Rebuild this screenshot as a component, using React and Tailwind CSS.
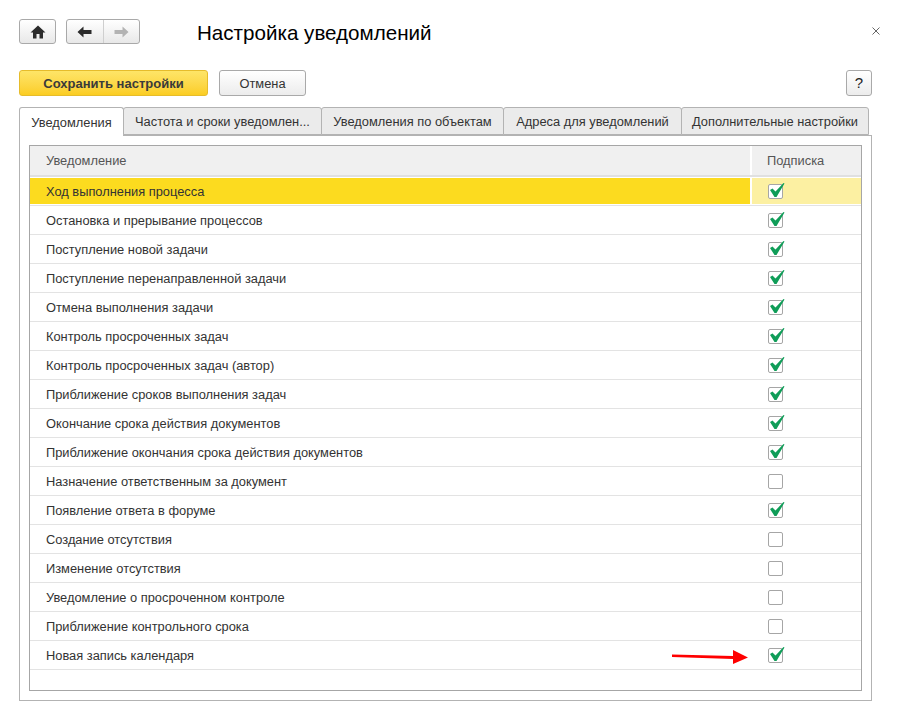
import React from "react";

const ROWS = [
  { label: "Ход выполнения процесса", on: true },
  { label: "Остановка и прерывание процессов", on: true },
  { label: "Поступление новой задачи", on: true },
  { label: "Поступление перенаправленной задачи", on: true },
  { label: "Отмена выполнения задачи", on: true },
  { label: "Контроль просроченных задач", on: true },
  { label: "Контроль просроченных задач (автор)", on: true },
  { label: "Приближение сроков выполнения задач", on: true },
  { label: "Окончание срока действия документов", on: true },
  { label: "Приближение окончания срока действия документов", on: true },
  { label: "Назначение ответственным за документ", on: false },
  { label: "Появление ответа в форуме", on: true },
  { label: "Создание отсутствия", on: false },
  { label: "Изменение отсутствия", on: false },
  { label: "Уведомление о просроченном контроле", on: false },
  { label: "Приближение контрольного срока", on: false },
  { label: "Новая запись календаря", on: true },
];

const TABS = [
  { label: "Частота и сроки уведомлен...", width: "w-[199px]" },
  { label: "Уведомления по объектам", width: "w-[183px]" },
  { label: "Адреса для уведомлений", width: "w-[179px]" },
  { label: "Дополнительные настройки", width: "w-[188px]" },
];

function Checkbox({ on }) {
  return (
    <div className="relative w-[15px] h-[15px] rounded-[2px] border border-[#a6a6a6] bg-white">
      {on && (
        <svg className="absolute left-0 top-[-5px]" width="17" height="19" viewBox="0 0 17 19">
          <path d="M1 10 L3.5 8.5 L6.5 11.5 L14.5 3 L15.5 3.5 L7.5 17 L5.5 17 Z" fill="#0f9d58" />
        </svg>
      )}
    </div>
  );
}

function Row({ label, on, active, last }) {
  return (
    <div className={`relative flex h-[29px] border-b border-[#e3e3e3] ${active ? "py-px" : ""}`}>
      <div className={`w-[722px] pl-4 pt-px flex items-center ${active ? "bg-[#fcdb1f] border-r-2 border-white" : ""}`}>
        {label}
      </div>
      <div className={`flex-1 pl-4 flex items-center ${active ? "bg-[#fcf0a2]" : ""}`}>
        <Checkbox on={on} />
      </div>
      {last && (
        <svg className="absolute left-[642px] top-[5px]" width="77" height="20" viewBox="0 0 77 20">
          <path d="M0 8.5 L61 10 L61 4 L76 11.5 L61 18 L61 13 L0 11 Z" fill="#ff0000" />
        </svg>
      )}
    </div>
  );
}

export default function App() {
  return (
    <div className="w-[898px] h-[716px] bg-white text-[12.85px] text-[#333] overflow-hidden" style={{ fontFamily: "'Liberation Sans', Arial, sans-serif" }}>
      {/* Header */}
      <div className="relative flex items-center h-[25px] mt-[19px] ml-[19px]">
        <button className="w-[37px] h-[25px] flex items-center justify-center rounded-[3px] border border-[#a9a9a9] bg-gradient-to-b from-white to-[#e8e8e8]">
          <svg width="16" height="14" viewBox="0 0 16 14">
            <path d="M8 0.5 L15.5 7.5 L13 7.5 L13 13.5 L9.5 13.5 L9.5 9 L6.5 9 L6.5 13.5 L3 13.5 L3 7.5 L0.5 7.5 Z" fill="#2b2b2b" />
          </svg>
        </button>
        <div className="ml-[10px] w-[74px] h-[25px] flex rounded-[3px] border border-[#a9a9a9] bg-gradient-to-b from-white to-[#e8e8e8]">
          <div className="flex-1 flex items-center justify-center border-r border-[#cfcfcf]">
            <svg width="15" height="12" viewBox="0 0 15 12">
              <path d="M0.5 6 L6.5 0.5 L6.5 4 L14.5 4 L14.5 8 L6.5 8 L6.5 11.5 Z" fill="#2b2b2b" />
            </svg>
          </div>
          <div className="flex-1 flex items-center justify-center">
            <svg width="15" height="12" viewBox="0 0 15 12">
              <path d="M14.5 6 L8.5 0.5 L8.5 4 L0.5 4 L0.5 8 L8.5 8 L8.5 11.5 Z" fill="#b3b3b3" />
            </svg>
          </div>
        </div>
        <div className="ml-[57px] pt-1 text-[20.6px] text-black">Настройка уведомлений</div>
        <div className="absolute left-[852px] top-[7px]">
          <svg width="10" height="10" viewBox="0 0 10 10">
            <path d="M1.5 1.5 L8.5 8.5 M8.5 1.5 L1.5 8.5" stroke="#666" strokeWidth="1" />
          </svg>
        </div>
      </div>

      {/* Command bar */}
      <div className="flex items-center h-[26px] mt-[26px] mx-[19px] w-[853px]">
        <button className="w-[189px] h-[26px] pt-px rounded-[3px] border border-[#e6bc2b] bg-gradient-to-b from-[#fee567] to-[#fbcd20] font-bold text-[#3a3a3a] text-[13px]">
          Сохранить настройки
        </button>
        <button className="ml-[11px] w-[87px] h-[26px] pt-px rounded-[3px] border border-[#a9a9a9] bg-gradient-to-b from-white to-[#ececec]">
          Отмена
        </button>
        <button className="ml-auto w-[26px] h-[26px] rounded-[3px] border border-[#a9a9a9] bg-gradient-to-b from-white to-[#ececec] text-[15px] text-[#222]">
          ?
        </button>
      </div>

      {/* Tabs */}
      <div className="flex mt-[11px] ml-[19px] h-[29px] relative z-10">
        <div className="w-[105px] h-[29px] pt-px flex items-center justify-center bg-white border border-b-0 border-[#b3b3b3] rounded-t-[3px]">
          Уведомления
        </div>
        {TABS.map((t) => (
          <div key={t.label} className={`${t.width} h-[28px] -ml-px pt-px flex items-center justify-center bg-[#ebebeb] border border-[#b3b3b3] rounded-t-[3px]`}>
            {t.label}
          </div>
        ))}
      </div>

      {/* Panel */}
      <div className="ml-[19px] -mt-px w-[853px] h-[566px] border border-[#b3b3b3] p-[9px]">
        <div className="w-[833px] h-[546px] border border-[#a6a6a6]">
          <div className="flex h-[31px] bg-[#f0f0f0] border-b-2 border-[#e0e0e0] text-[#555]">
            <div className="w-[722px] pl-4 flex items-center border-r-2 border-white">Уведомление</div>
            <div className="flex-1 pl-[15px] flex items-center">Подписка</div>
          </div>
          {ROWS.map((r, i) => (
            <Row key={r.label} label={r.label} on={r.on} active={i === 0} last={i === ROWS.length - 1} />
          ))}
        </div>
      </div>
    </div>
  );
}
